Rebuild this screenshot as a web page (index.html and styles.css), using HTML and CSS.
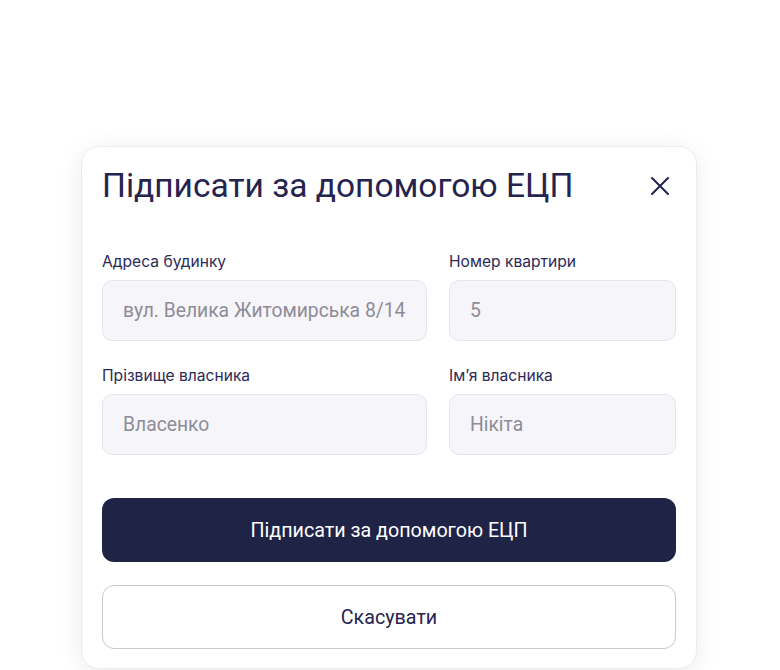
FILE: index.html
```html
<!DOCTYPE html>
<html lang="uk">
<head>
<meta charset="utf-8">
<link rel="stylesheet" href="styles.css">
</head>
<body>
<div class="card">
  <div class="header">
    <h1 class="title">Підписати за допомогою ЕЦП</h1>
    <button class="close" aria-label="close">
      <svg width="20" height="20" viewBox="0 0 20 20"><path d="M2 2 L18 18 M18 2 L2 18" stroke="#24234d" stroke-width="2" stroke-linecap="round" fill="none"/></svg>
    </button>
  </div>
  <div class="grid">
    <div class="field">
      <label class="label">Адреса будинку</label>
      <div class="input">вул. Велика Житомирська 8/14</div>
    </div>
    <div class="field">
      <label class="label">Номер квартири</label>
      <div class="input">5</div>
    </div>
    <div class="field">
      <label class="label">Прізвище власника</label>
      <div class="input">Власенко</div>
    </div>
    <div class="field">
      <label class="label">Ім’я власника</label>
      <div class="input">Нікіта</div>
    </div>
  </div>
  <div class="actions">
    <button class="btn primary">Підписати за допомогою ЕЦП</button>
    <button class="btn secondary">Скасувати</button>
  </div>
</div>
</body>
</html>
```
FILE: styles.css
```css
* { box-sizing: border-box; }
html, body { margin: 0; padding: 0; background: #fff; }
body { width: 780px; height: 670px; overflow: hidden; }
.card {
  margin: 146px 0 0 81px;
  width: 616px;
  height: 523px;
  background: #fff;
  border: 1px solid #ececf0;
  border-radius: 18px;
  box-shadow: 0 4px 24px rgba(30, 30, 60, 0.08);
  padding: 19px 20px 20px 20px;
}
.header {
  display: flex;
  align-items: center;
  justify-content: space-between;
}
.title {
  margin: 0;
  font-family: Roboto, "Liberation Sans", sans-serif;
  font-weight: 400;
  font-size: 33.5px;
  line-height: 40px;
  color: #25244e;
}
.close {
  border: 0;
  background: none;
  padding: 0;
  width: 20px;
  height: 20px;
  margin-right: 6px;
  display: flex;
}
.grid {
  margin-top: 46px;
  display: grid;
  grid-template-columns: 325px 227px;
  column-gap: 22px;
  row-gap: 25px;
}
.field { display: flex; flex-direction: column; }
.label {
  font-family: Inter, "Noto Sans", sans-serif;
  font-size: 15.6px;
  line-height: 20px;
  color: #2c2a58;
  margin-bottom: 8px;
}
.input {
  height: 61px;
  border: 1px solid #e6e5ec;
  border-radius: 10px;
  background: #f6f5f9;
  display: flex;
  align-items: center;
  padding-left: 20px;
  font-family: Roboto, "Liberation Sans", sans-serif;
  font-size: 19.3px;
  color: #8e8c98;
  white-space: nowrap;
}
.actions {
  margin-top: 43px;
  display: flex;
  flex-direction: column;
  gap: 23px;
}
.btn {
  width: 574px;
  height: 64px;
  border-radius: 12px;
  font-family: Roboto, "Liberation Sans", sans-serif;
  font-size: 19.7px;
  cursor: pointer;
}
.primary {
  background: #1f2447;
  border: 0;
  color: #fff;
}
.secondary {
  background: #fff;
  border: 1.5px solid #cbc9d3;
  color: #25244e;
}
```
